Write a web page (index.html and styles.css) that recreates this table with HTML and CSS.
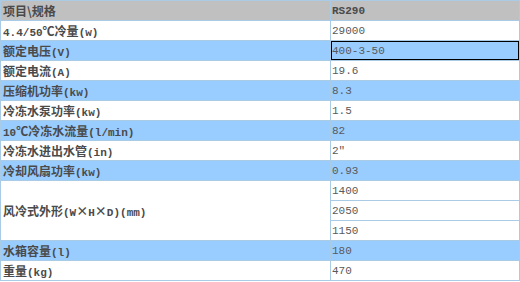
FILE: index.html
```html
<!DOCTYPE html>
<html>
<head>
<meta charset="utf-8">
<link rel="stylesheet" href="styles.css">
</head>
<body>
<table class="spec">
  <tr class="head">
    <td class="k">项目\规格</td>
    <td class="v hv"><span class="a">RS290</span></td>
  </tr>
  <tr>
    <td class="k"><span class="a">4.4/50</span>℃冷量<span class="a">(w)</span></td>
    <td class="v">29000</td>
  </tr>
  <tr class="blue">
    <td class="k">额定电压<span class="a">(V)</span></td>
    <td class="v sel">400-3-50</td>
  </tr>
  <tr>
    <td class="k">额定电流<span class="a">(A)</span></td>
    <td class="v">19.6</td>
  </tr>
  <tr class="blue">
    <td class="k">压缩机功率<span class="a">(kw)</span></td>
    <td class="v">8.3</td>
  </tr>
  <tr>
    <td class="k">冷冻水泵功率<span class="a">(kw)</span></td>
    <td class="v">1.5</td>
  </tr>
  <tr class="blue">
    <td class="k"><span class="a">10</span>℃冷冻水流量<span class="a">(l/min)</span></td>
    <td class="v">82</td>
  </tr>
  <tr>
    <td class="k">冷冻水进出水管<span class="a">(in)</span></td>
    <td class="v">2″</td>
  </tr>
  <tr class="blue">
    <td class="k">冷却风扇功率<span class="a">(kw)</span></td>
    <td class="v">0.93</td>
  </tr>
  <tr>
    <td class="k" rowspan="3">风冷式外形<span class="a">(W</span>×<span class="a">H</span>×<span class="a">D)(mm)</span></td>
    <td class="v">1400</td>
  </tr>
  <tr>
    <td class="v">2050</td>
  </tr>
  <tr>
    <td class="v">1150</td>
  </tr>
  <tr class="blue">
    <td class="k">水箱容量<span class="a">(l)</span></td>
    <td class="v">180</td>
  </tr>
  <tr>
    <td class="k">重量<span class="a">(kg)</span></td>
    <td class="v">470</td>
  </tr>
</table>
</body>
</html>
```
FILE: styles.css
```css
html, body {
  margin: 0;
  padding: 0;
  background: #ffffff;
}

.spec {
  width: 520px;
  border-collapse: collapse;
  table-layout: fixed;
}

.spec td {
  height: 19px;
  padding: 0 0 0 2px;
  border: 1px solid #a9cbe6;
  vertical-align: middle;
  white-space: nowrap;
  line-height: 19px;
}

.spec .k {
  width: 327px;
  font: bold 12px "Noto Sans CJK SC", "Liberation Mono", sans-serif;
  color: #4a4a4a;
}

.spec .a {
  font-family: "Liberation Mono", monospace;
  font-size: 11px;
}

.spec .v {
  font: 11px "Liberation Mono", "Noto Sans CJK SC", monospace;
  color: #5a5a5a;
  padding-left: 1px;
}

.spec .hv {
  font-weight: bold;
  color: #4a4a4a;
}

.spec .head td {
  background: #c0c0c0;
}

.spec .blue td {
  background: #99ccff;
}

.spec .sel {
  box-shadow: inset 0 0 0 1px #000000;
}
```
